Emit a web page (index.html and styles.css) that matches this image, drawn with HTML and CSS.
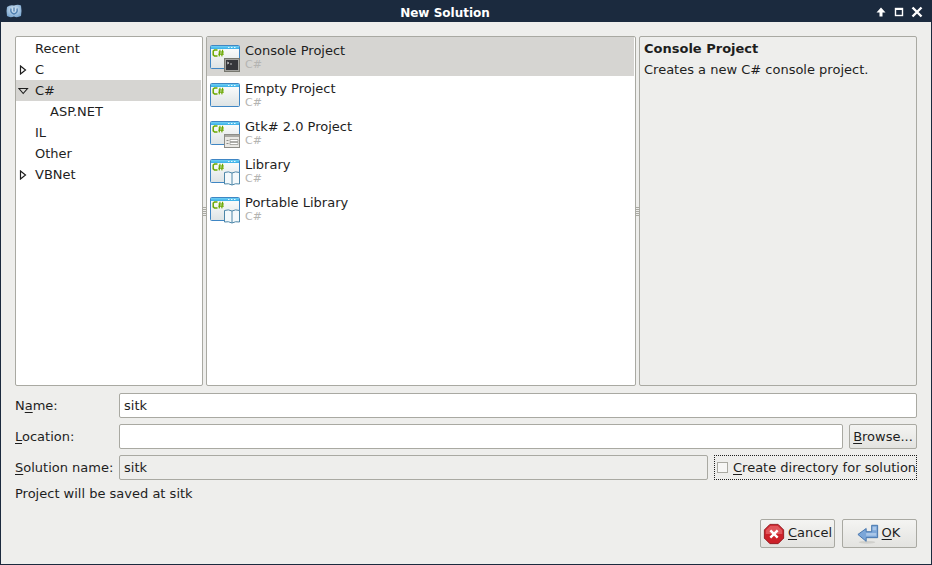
FILE: index.html
```html
<!DOCTYPE html>
<html>
	<head>
		<title>New Solution</title>
		<meta charset="utf-8">
		<link rel="icon" href="data:,">
		<link rel="stylesheet" href="styles.css">
	</head>
	<body>
		<svg class="defs" width="0" height="0">
			<defs>
				<linearGradient id="win_bg" x1="0" y1="0" x2="0" y2="1">
					<stop offset="0" stop-color="#ffffff"/>
					<stop offset="1" stop-color="#dde3e4"/>
				</linearGradient>
				<linearGradient id="win_bar" x1="0" y1="0" x2="0" y2="1">
					<stop offset="0" stop-color="#6fd0f4"/>
					<stop offset="1" stop-color="#39aee8"/>
				</linearGradient>
				<radialGradient id="app_bg" cx="0.5" cy="0.4" r="0.7">
					<stop offset="0" stop-color="#dbe9f5"/>
					<stop offset="1" stop-color="#6f9fcc"/>
				</radialGradient>
				<symbol id="win" viewBox="0 0 30 25">
					<rect x="0.5" y="0.5" width="29" height="23" rx="1" fill="url(#win_bg)" stroke="#3f86c4"/>
					<rect x="1" y="1" width="28" height="3" fill="url(#win_bar)"/>
					<path d="M18 2.5h1.5M21 2.5h1.5M24 2.5h1.5" stroke="#e6f6ff" stroke-width="1"/>
					<path d="M7.5 5H4.5L3.2 6.2V9.8L4.5 11H7.5" fill="none" stroke="#6aa800" stroke-width="1.5"/>
					<path d="M10 4.8L9.2 11.4M12.6 4.8L11.8 11.4M8.4 7H14M8.2 9.2H13.8" fill="none" stroke="#6aa800" stroke-width="1.2"/>
				</symbol>
			</defs>
		</svg>
		<div class="window">
			<div class="titlebar">
				<svg class="app_icon" width="16" height="14" viewBox="0 0 16 14">
					<path d="M1 3Q4 0.5 8 1.5Q12 0 15 1.5Q16 7 15 12Q11 14 8 12.5Q4 14 1 12Q0 7 1 3Z" fill="url(#app_bg)"/>
					<path d="M5 4.5Q4 9 8 10Q12 9 11 4.5M8 3.5V7.5" fill="none" stroke="#4f7fb0" stroke-width="1.3"/>
				</svg>
				<div class="title">New Solution</div>
				<div class="win_buttons">
					<svg width="12" height="12" viewBox="0 0 12 12"><path d="M6 1.5L10.5 6.5H7.5V10.5H4.5V6.5H1.5Z" fill="#fff"/></svg>
					<svg width="12" height="12" viewBox="0 0 12 12"><rect x="2.5" y="2.5" width="7" height="7" fill="none" stroke="#fff" stroke-width="1.4"/><path d="M2 3H10" stroke="#fff" stroke-width="2"/></svg>
					<svg width="12" height="12" viewBox="0 0 12 12"><path d="M1.5 1.5L10.5 10.5M10.5 1.5L1.5 10.5" stroke="#fff" stroke-width="2.4"/></svg>
				</div>
			</div>
			<div class="content">
				<div class="panes">
					<div class="pane tree">
						<div class="tree_row"><span class="slot"></span>Recent</div>
						<div class="tree_row"><span class="slot"><svg width="8" height="10" viewBox="0 0 8 10"><path d="M1.5 1L6.5 5L1.5 9Z" fill="#fff" stroke="#1e1e1e" stroke-width="1.2"/></svg></span>C</div>
						<div class="tree_row selected"><span class="slot"><svg class="open" width="11" height="8" viewBox="0 0 11 8"><path d="M1 1.5H9.5L5.2 6.5Z" fill="#d6d5d2" stroke="#1e1e1e" stroke-width="1.1"/></svg></span>C#</div>
						<div class="tree_row child"><span class="slot"></span>ASP.NET</div>
						<div class="tree_row"><span class="slot"></span>IL</div>
						<div class="tree_row"><span class="slot"></span>Other</div>
						<div class="tree_row"><span class="slot"><svg width="8" height="10" viewBox="0 0 8 10"><path d="M1.5 1L6.5 5L1.5 9Z" fill="#fff" stroke="#1e1e1e" stroke-width="1.2"/></svg></span>VBNet</div>
					</div>
					<div class="grip"></div>
					<div class="pane templates">
						<div class="template selected">
							<div class="tpl_icon">
								<svg width="30" height="25"><use href="#win"/></svg>
								<svg class="badge" width="16" height="14" viewBox="0 0 16 14">
									<rect x="0.5" y="0.5" width="15" height="13" fill="#a3a3a0" stroke="#77776f"/>
									<rect x="2" y="2" width="12" height="10" fill="#35363a"/>
									<path d="M3 4L5 5L3 6M6 6H8" stroke="#e0e0e0" fill="none" stroke-width="0.8"/>
								</svg>
							</div>
							<div class="tpl_text">
								<div>Console Project</div>
								<div class="lang">C#</div>
							</div>
						</div>
						<div class="template">
							<div class="tpl_icon"><svg width="30" height="25"><use href="#win"/></svg></div>
							<div class="tpl_text">
								<div>Empty Project</div>
								<div class="lang">C#</div>
							</div>
						</div>
						<div class="template">
							<div class="tpl_icon">
								<svg width="30" height="25"><use href="#win"/></svg>
								<svg class="badge" width="16" height="14" viewBox="0 0 16 14">
									<rect x="0.5" y="0.5" width="15" height="13" fill="#e9e8e4" stroke="#8d8d88"/>
									<rect x="1" y="1" width="14" height="2" fill="#a9a9a4"/>
									<path d="M2.5 6.5H4.5M2.5 9.5H4.5" stroke="#8d8d88"/>
									<path d="M6 5.5H14V7.5H6ZM6 8.5H14V10.5H6Z" fill="#fff" stroke="#8d8d88" stroke-width="0.7"/>
								</svg>
							</div>
							<div class="tpl_text">
								<div>Gtk# 2.0 Project</div>
								<div class="lang">C#</div>
							</div>
						</div>
						<div class="template">
							<div class="tpl_icon">
								<svg width="30" height="25"><use href="#win"/></svg>
								<svg class="badge" width="16" height="15" viewBox="0 0 16 15">
									<path d="M0.5 1.5Q4.5 0 8 2Q11.5 0 15.5 1.5V13Q11.5 12 8 14Q4.5 12 0.5 13Z" fill="#f4f9fb" stroke="#4c86a8"/>
									<path d="M8 2V14" stroke="#4c86a8"/>
								</svg>
							</div>
							<div class="tpl_text">
								<div>Library</div>
								<div class="lang">C#</div>
							</div>
						</div>
						<div class="template">
							<div class="tpl_icon">
								<svg width="30" height="25"><use href="#win"/></svg>
								<svg class="badge" width="16" height="15" viewBox="0 0 16 15">
									<path d="M0.5 1.5Q4.5 0 8 2Q11.5 0 15.5 1.5V13Q11.5 12 8 14Q4.5 12 0.5 13Z" fill="#f4f9fb" stroke="#4c86a8"/>
									<path d="M8 2V14" stroke="#4c86a8"/>
								</svg>
							</div>
							<div class="tpl_text">
								<div>Portable Library</div>
								<div class="lang">C#</div>
							</div>
						</div>
					</div>
					<div class="grip"></div>
					<div class="pane info">
						<div class="info_title">Console Project</div>
						<div>Creates a new C# console project.</div>
					</div>
				</div>
				<div class="form_row">
					<label class="field_label">N<u>a</u>me:</label>
					<div class="entry">sitk</div>
				</div>
				<div class="form_row">
					<label class="field_label"><u>L</u>ocation:</label>
					<div class="entry"></div>
					<button class="btn browse"><span><u>B</u>rowse...</span></button>
				</div>
				<div class="form_row">
					<label class="field_label"><u>S</u>olution name:</label>
					<div class="entry disabled">sitk</div>
					<div class="check">
						<span class="check_box"></span>
						<span><u>C</u>reate directory for solution</span>
					</div>
				</div>
				<div class="saved_at">Project will be saved at sitk</div>
				<div class="actions">
					<button class="btn action">
						<svg width="22" height="22" viewBox="0 0 24 24">
							<path d="M7.5 1.5H16.5L22.5 7.5V16.5L16.5 22.5H7.5L1.5 16.5V7.5Z" fill="#cc2129" stroke="#8f1a20"/>
							<path d="M8 3H16L21 8V12H3V8Z" fill="#e0555a"/>
							<path d="M8 8L16 16M16 8L8 16" stroke="#fff" stroke-width="2.6"/>
						</svg>
						<span><u>C</u>ancel</span>
					</button>
					<button class="btn action ok">
						<svg width="22" height="22" viewBox="0 0 24 24">
							<ellipse cx="11" cy="21" rx="9" ry="1.5" fill="#d0d0cc"/>
							<path d="M16 2.5H22.5V16H10V20L1 12.5L10 6V9.5H16Z" fill="#7ba6d8" stroke="#3d6ea8"/>
							<path d="M17 4H21V8H17ZM10 11H21V14H10Z" fill="#a9c6e8"/>
						</svg>
						<span><u>O</u>K</span>
					</button>
				</div>
			</div>
		</div>
	</body>
</html>
```

FILE: styles.css
```css
html{
	font-family: 'DejaVu Sans', sans-serif;
	font-size: 13px;
}
body{
	margin: 0;
	background-color: #1b2a3e;
	color: #1e1e1e;
}
u{
	text-underline-offset: 2px;
}
.defs{
	display: block;
	height: 0;
}
.window{
	display: flex;
	flex-direction: column;
	width: 932px;
	height: 565px;
	box-sizing: border-box;
	padding: 0 1px 1px 1px;
	overflow: hidden;
}
.titlebar{
	display: flex;
	align-items: center;
	height: 22px;
	flex: none;
	color: #fff;
}
.app_icon{
	margin-left: 5px;
	margin-bottom: 1px;
	flex: none;
}
.title{
	flex: 1;
	text-align: center;
	font-size: 12px;
	font-weight: bold;
	margin-right: 7px;
	padding-top: 3px;
}
.win_buttons{
	display: flex;
	gap: 6px;
	margin-right: 8px;
	padding-top: 2px;
}
.content{
	flex: 1;
	display: flex;
	flex-direction: column;
	background-color: #eeeeec;
	padding: 14px 14px 16px 14px;
}
.panes{
	display: flex;
	height: 350px;
	flex: none;
	margin-bottom: 7px;
}
.pane{
	border: 1px solid #a9a9a2;
	border-radius: 2px;
	box-sizing: border-box;
	overflow: hidden;
}
.grip{
	width: 3px;
	flex: none;
	background: repeating-linear-gradient(#a9a9a2 0 1px, transparent 1px 2px) center / 3px 9px no-repeat;
}
.tree{
	width: 188px;
	background-color: #fff;
	padding-top: 1px;
}
.tree_row{
	display: flex;
	align-items: center;
	height: 21px;
	margin-right: 1px;
}
.slot{
	display: flex;
	align-items: center;
	width: 19px;
	padding-left: 3px;
	box-sizing: border-box;
	flex: none;
}
.slot .open{
	margin-left: -1px;
}
.tree_row.child{
	padding-left: 15px;
}
.tree_row.selected, .template.selected{
	background-color: #d6d5d2;
}
.templates{
	width: 430px;
	background-color: #fff;
}
.template{
	display: flex;
	height: 38px;
	padding-left: 3px;
	margin-right: 1px;
}
.template.selected{
	height: 39px;
	margin-bottom: -1px;
}
.tpl_icon{
	position: relative;
	width: 30px;
	height: 25px;
	margin-top: 8px;
	margin-right: 5px;
	flex: none;
}
.tpl_icon > svg{
	display: block;
}
.badge{
	position: absolute;
	right: 0;
	bottom: -2px;
}
.tpl_text{
	padding-top: 6px;
	line-height: 15px;
}
.lang{
	color: #b4b4b2;
	font-size: 11px;
	line-height: 13px;
}
.info{
	flex: 1;
	padding: 1px 4px;
	line-height: 21px;
}
.info_title{
	font-weight: bold;
}
.form_row{
	display: flex;
	align-items: center;
	height: 25px;
	margin-bottom: 6px;
	flex: none;
}
.field_label{
	width: 104px;
	flex: none;
}
.entry{
	flex: 1;
	height: 25px;
	box-sizing: border-box;
	border: 1px solid #a9a9a2;
	border-radius: 2px;
	background-color: #fff;
	padding: 0 4px;
	line-height: 23px;
}
.entry.disabled{
	background-color: #eeeeec;
	flex: none;
	width: 589px;
}
.btn{
	display: flex;
	align-items: center;
	justify-content: center;
	font: inherit;
	color: inherit;
	border: 1px solid #a9a9a2;
	border-radius: 2px;
	background: linear-gradient(#f4f4f2, #e3e3e0);
	padding: 0;
}
.browse{
	width: 68px;
	height: 25px;
	margin-left: 6px;
	flex: none;
}
.check{
	display: flex;
	align-items: center;
	flex: 1;
	height: 25px;
	box-sizing: border-box;
	margin-left: 6px;
	border: 1px dotted #1e1e1e;
	padding-left: 2px;
	white-space: nowrap;
	gap: 5px;
}
.check_box{
	width: 9px;
	height: 9px;
	border: 1px solid #a9a9a2;
	background-color: #f6f6f5;
	flex: none;
}
.saved_at{
	line-height: 16px;
}
.actions{
	display: flex;
	justify-content: flex-end;
	gap: 7px;
	margin-top: auto;
}
.action{
	width: 75px;
	height: 29px;
	gap: 3px;
}
.action span{
	margin-bottom: 2px;
}
.ok{
	padding-right: 2px;
}
```
